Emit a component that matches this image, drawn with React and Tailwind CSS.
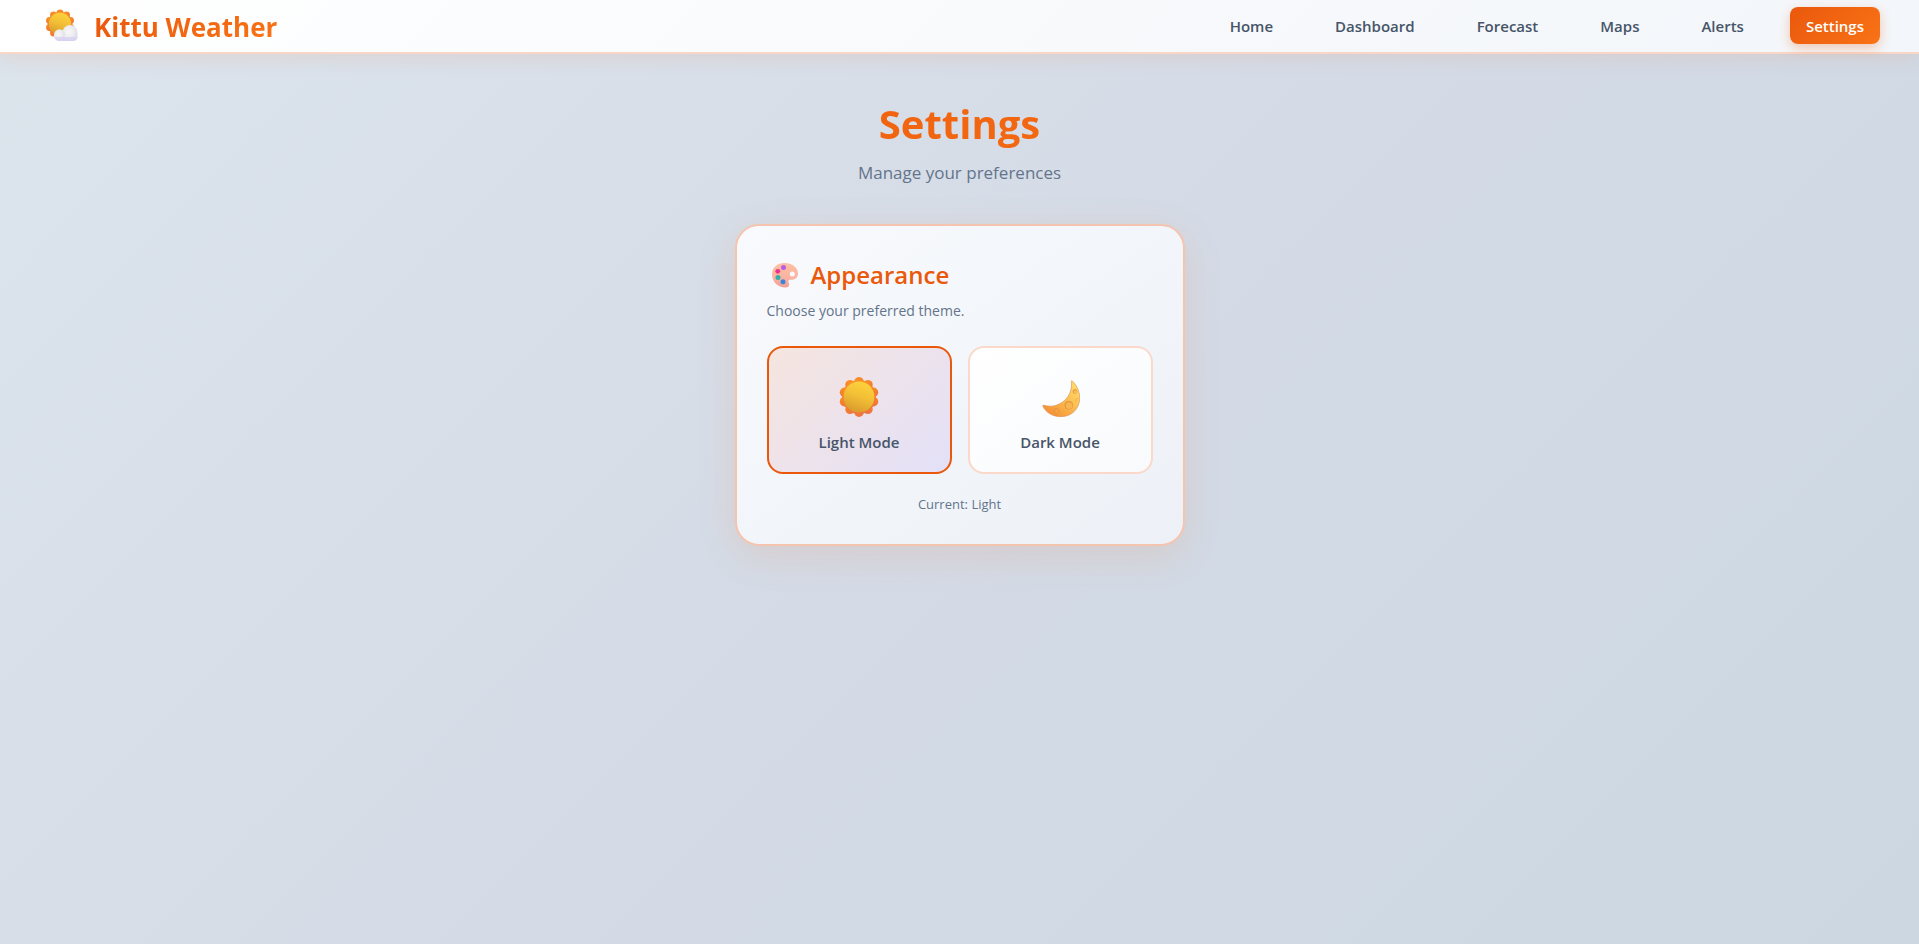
import { useState } from 'react';

const SCALLOPS = Array.from({ length: 10 }, (_, i) => (i * Math.PI) / 5);

function SunShape({ id, cx, cy, r }) {
  return (
    <g>
      <defs>
        <linearGradient id={`${id}-rays`} x1="0" y1="0" x2="0.3" y2="1">
          <stop offset="0" stopColor="#fb9a2c" />
          <stop offset="0.5" stopColor="#f58228" />
          <stop offset="1" stopColor="#ef7440" />
        </linearGradient>
        <linearGradient id={`${id}-disc`} x1="0.7" y1="0" x2="0.35" y2="1">
          <stop offset="0" stopColor="#fdd23c" />
          <stop offset="0.45" stopColor="#f4c136" />
          <stop offset="1" stopColor="#d99a2c" />
        </linearGradient>
      </defs>
      <g fill={`url(#${id}-rays)`}>
        {SCALLOPS.map((a) => (
          <circle key={a} cx={cx + Math.sin(a) * r * 0.76} cy={cy - Math.cos(a) * r * 0.76} r={r * 0.24} />
        ))}
        <circle cx={cx} cy={cy} r={r * 0.85} />
      </g>
      <circle cx={cx} cy={cy} r={r * 0.77} fill={`url(#${id}-disc)`} />
    </g>
  );
}

function SunIcon() {
  return (
    <svg viewBox="0 0 40 40" className="size-10" aria-hidden="true">
      <SunShape id="sun" cx={20} cy={20} r={20} />
    </svg>
  );
}

function SunCloudIcon() {
  return (
    <svg viewBox="0 0 34 34" className="size-[34px]" aria-hidden="true">
      <defs>
        <linearGradient id="cloud" x1="0" y1="0" x2="0" y2="1">
          <stop offset="0" stopColor="#f2f1f4" />
          <stop offset="0.6" stopColor="#e9e7ef" />
          <stop offset="1" stopColor="#d3cbf0" />
        </linearGradient>
        <radialGradient id="puff" cx="0.4" cy="0.45" r="0.6">
          <stop offset="0" stopColor="#f8f8f8" />
          <stop offset="0.7" stopColor="#ebeaee" />
          <stop offset="1" stopColor="#dddbe6" />
        </radialGradient>
      </defs>
      <SunShape id="logo-sun" cx={15} cy={15} r={14.5} />
      <rect x="9" y="21" width="24" height="11" rx="5.5" fill="url(#cloud)" />
      <circle cx="25" cy="23.5" r="7.4" fill="url(#puff)" />
      <circle cx="14.5" cy="25.5" r="5.2" fill="url(#puff)" />
      <path d="M9.5 28h23.2c-.8 2.600-2.700 4-5.200 4H14.500c-2.500 0-4.200-1.400-5-4z" fill="#d8d2f1" opacity="0.75" />
    </svg>
  );
}

function MoonIcon() {
  return (
    <svg viewBox="0 0 40 40" className="size-10" aria-hidden="true">
      <defs>
        <linearGradient id="moon" x1="0.9" y1="0.2" x2="0.25" y2="1">
          <stop offset="0" stopColor="#ffd866" />
          <stop offset="0.5" stopColor="#fbb84c" />
          <stop offset="1" stopColor="#f58f35" />
        </linearGradient>
      </defs>
      <path
        d="M31.300 4.200c.2-.6.8-.6 1.200 0C37 9 39.800 14.500 39.700 21.500 39.400 32 31.500 39.700 21 39.700 12.500 39.700 6 35.500 2.900 29.300c-.3-.8.2-1.200 1-1A21.600 21.600 0 0 0 31.300 4.200z"
        fill="url(#moon)"
        stroke="#d98a4c"
        strokeWidth="0.6"
      />
      <g fill="#eda345" stroke="#d98b3c" strokeWidth="0.6">
        <circle cx="28.800" cy="28.200" r="4" />
        <circle cx="16.600" cy="33.800" r="2.300" />
        <circle cx="35" cy="14.500" r="2" />
      </g>
      <circle cx="29.200" cy="28.800" r="3.200" fill="#f8b650" />
      <circle cx="16.900" cy="34.200" r="1.600" fill="#f9a346" />
      <circle cx="35.300" cy="14.900" r="1.400" fill="#fcc65c" />
      <path d="M38.600 21.500c-2.200-.6-3.600 1.500-2.200 3" fill="none" stroke="#e7a044" strokeWidth="0.6" />
    </svg>
  );
}

function PaletteIcon() {
  return (
    <svg viewBox="0 0 28 28" className="size-7" aria-hidden="true">
      <defs>
        <linearGradient id="palette" x1="0" y1="0" x2="0" y2="1">
          <stop offset="0" stopColor="#fdc0a0" />
          <stop offset="0.6" stopColor="#fbb3a3" />
          <stop offset="1" stopColor="#f0a095" />
        </linearGradient>
      </defs>
      <path
        fillRule="evenodd"
        d="M13.500 2C6.300 2 1 6.700 1 13.500 1 20.500 6.800 26.500 14.500 26.500c2.800 0 4-1.600 3.600-3.800-.2-1-.9-1.800-.7-2.700.2-.9 1-1.300 2.200-1.200C24.600 19 27 16 27 12.500 27 6.500 21 2 13.500 2zm7.800 8.600a2.500 2.500 0 1 1 0 5 2.500 2.500 0 0 1 0-5z"
        fill="url(#palette)"
      />
      <circle cx="12.500" cy="6.600" r="2.500" fill="#bb5be6" />
      <circle cx="6.800" cy="10.300" r="2.400" fill="#f0328c" />
      <circle cx="7" cy="16.600" r="2.500" fill="#35ada8" />
      <circle cx="12" cy="20.800" r="2.500" fill="#3b86dd" />
    </svg>
  );
}

const LINKS = ['Home', 'Dashboard', 'Forecast', 'Maps', 'Alerts', 'Settings'];

const THEMES = [
  { id: 'Light', label: 'Light Mode', Icon: SunIcon },
  { id: 'Dark', label: 'Dark Mode', Icon: MoonIcon },
];

export default function App() {
  const [theme, setTheme] = useState('Light');

  return (
    <div className="min-h-screen bg-[linear-gradient(135deg,#dce4ec_0%,#d4dbe6_50%,#ccd7e2_100%)] font-['Open_Sans','Noto_Sans',sans-serif]">
      <header className="flex h-[54px] items-center justify-between border-b-2 border-[#f9d6c5] bg-[linear-gradient(135deg,#ffffff,#f8fafc_50%,#f3f6fa)] pr-[39px] pb-px pl-[45px] shadow-[0_4px_20px_rgba(234,88,12,0.1)]">
        <a href="#home" className="flex items-center gap-[15px]">
          <SunCloudIcon />
          <span className="bg-linear-135 from-[#ea580c] to-[#f97316] bg-clip-text pt-0.5 text-[26px] leading-8 font-bold text-transparent">
            Kittu Weather
          </span>
        </a>
        <nav className="flex items-center gap-[30px]">
          {LINKS.map((name) => (
            <a
              key={name}
              href={`#${name.toLowerCase()}`}
              aria-current={name === 'Settings' ? 'page' : undefined}
              className={
                name === 'Settings'
                  ? 'rounded-lg bg-linear-135 from-[#ea580c] to-[#f97316] px-4 pt-[9px] pb-[7px] text-[15px] leading-[21px] font-semibold text-white shadow-[0_4px_12px_rgba(234,88,12,0.3)]'
                  : 'rounded-lg px-4 pt-[9px] pb-[7px] text-[15px] leading-[21px] font-semibold text-[#475569]'
              }
            >
              {name}
            </a>
          ))}
        </nav>
      </header>

      <main className="flex flex-col items-center px-5 pt-10 pb-10">
        <h1 className="w-full bg-linear-135 from-[#ea580c] to-[#f97316] bg-clip-text text-center text-[40px] leading-[60px] font-bold text-transparent">
          Settings
        </h1>
        <p className="mt-[5px] text-[17px] leading-7 text-[#64748b]">Manage your preferences</p>

        <section className="mt-[37px] w-full max-w-[450px] rounded-3xl border-2 border-[#f5c4ae] bg-[linear-gradient(145deg,#f9fafd,#f2f6fa_50%,#edf1f7)] p-[30px] shadow-[0_10px_40px_rgba(234,88,12,0.12)]">
          <h2 className="flex items-center gap-3 pl-1 text-[24px] leading-[38px] font-semibold text-[#ea580c]">
            <PaletteIcon />
            Appearance
          </h2>
          <p className="mt-[5px] text-[14px] leading-6 text-[#64748b]">Choose your preferred theme.</p>

          <div className="mt-[23px] grid grid-cols-2 gap-4">
            {THEMES.map(({ id, label, Icon }) => (
              <button
                key={id}
                type="button"
                aria-pressed={theme === id}
                onClick={() => setTheme(id)}
                className={
                  theme === id
                    ? 'flex h-32 cursor-pointer flex-col items-center gap-[13px] rounded-2xl border-2 border-[#ea580c] bg-[linear-gradient(135deg,#f6e5df,#e3e0f8)] pt-[29px] text-[15px] leading-6 font-semibold text-[#475569]'
                    : 'flex h-32 cursor-pointer flex-col items-center gap-[13px] rounded-2xl border-2 border-[#fad9ca] bg-[linear-gradient(145deg,#ffffff,#f8fafc)] pt-[29px] text-[15px] leading-6 font-semibold text-[#475569]'
                }
              >
                <Icon />
                {label}
              </button>
            ))}
          </div>

          <p className="mt-5 text-center text-[13px] leading-5 text-[#64748b]">Current: {theme}</p>
        </section>
      </main>
    </div>
  );
}
